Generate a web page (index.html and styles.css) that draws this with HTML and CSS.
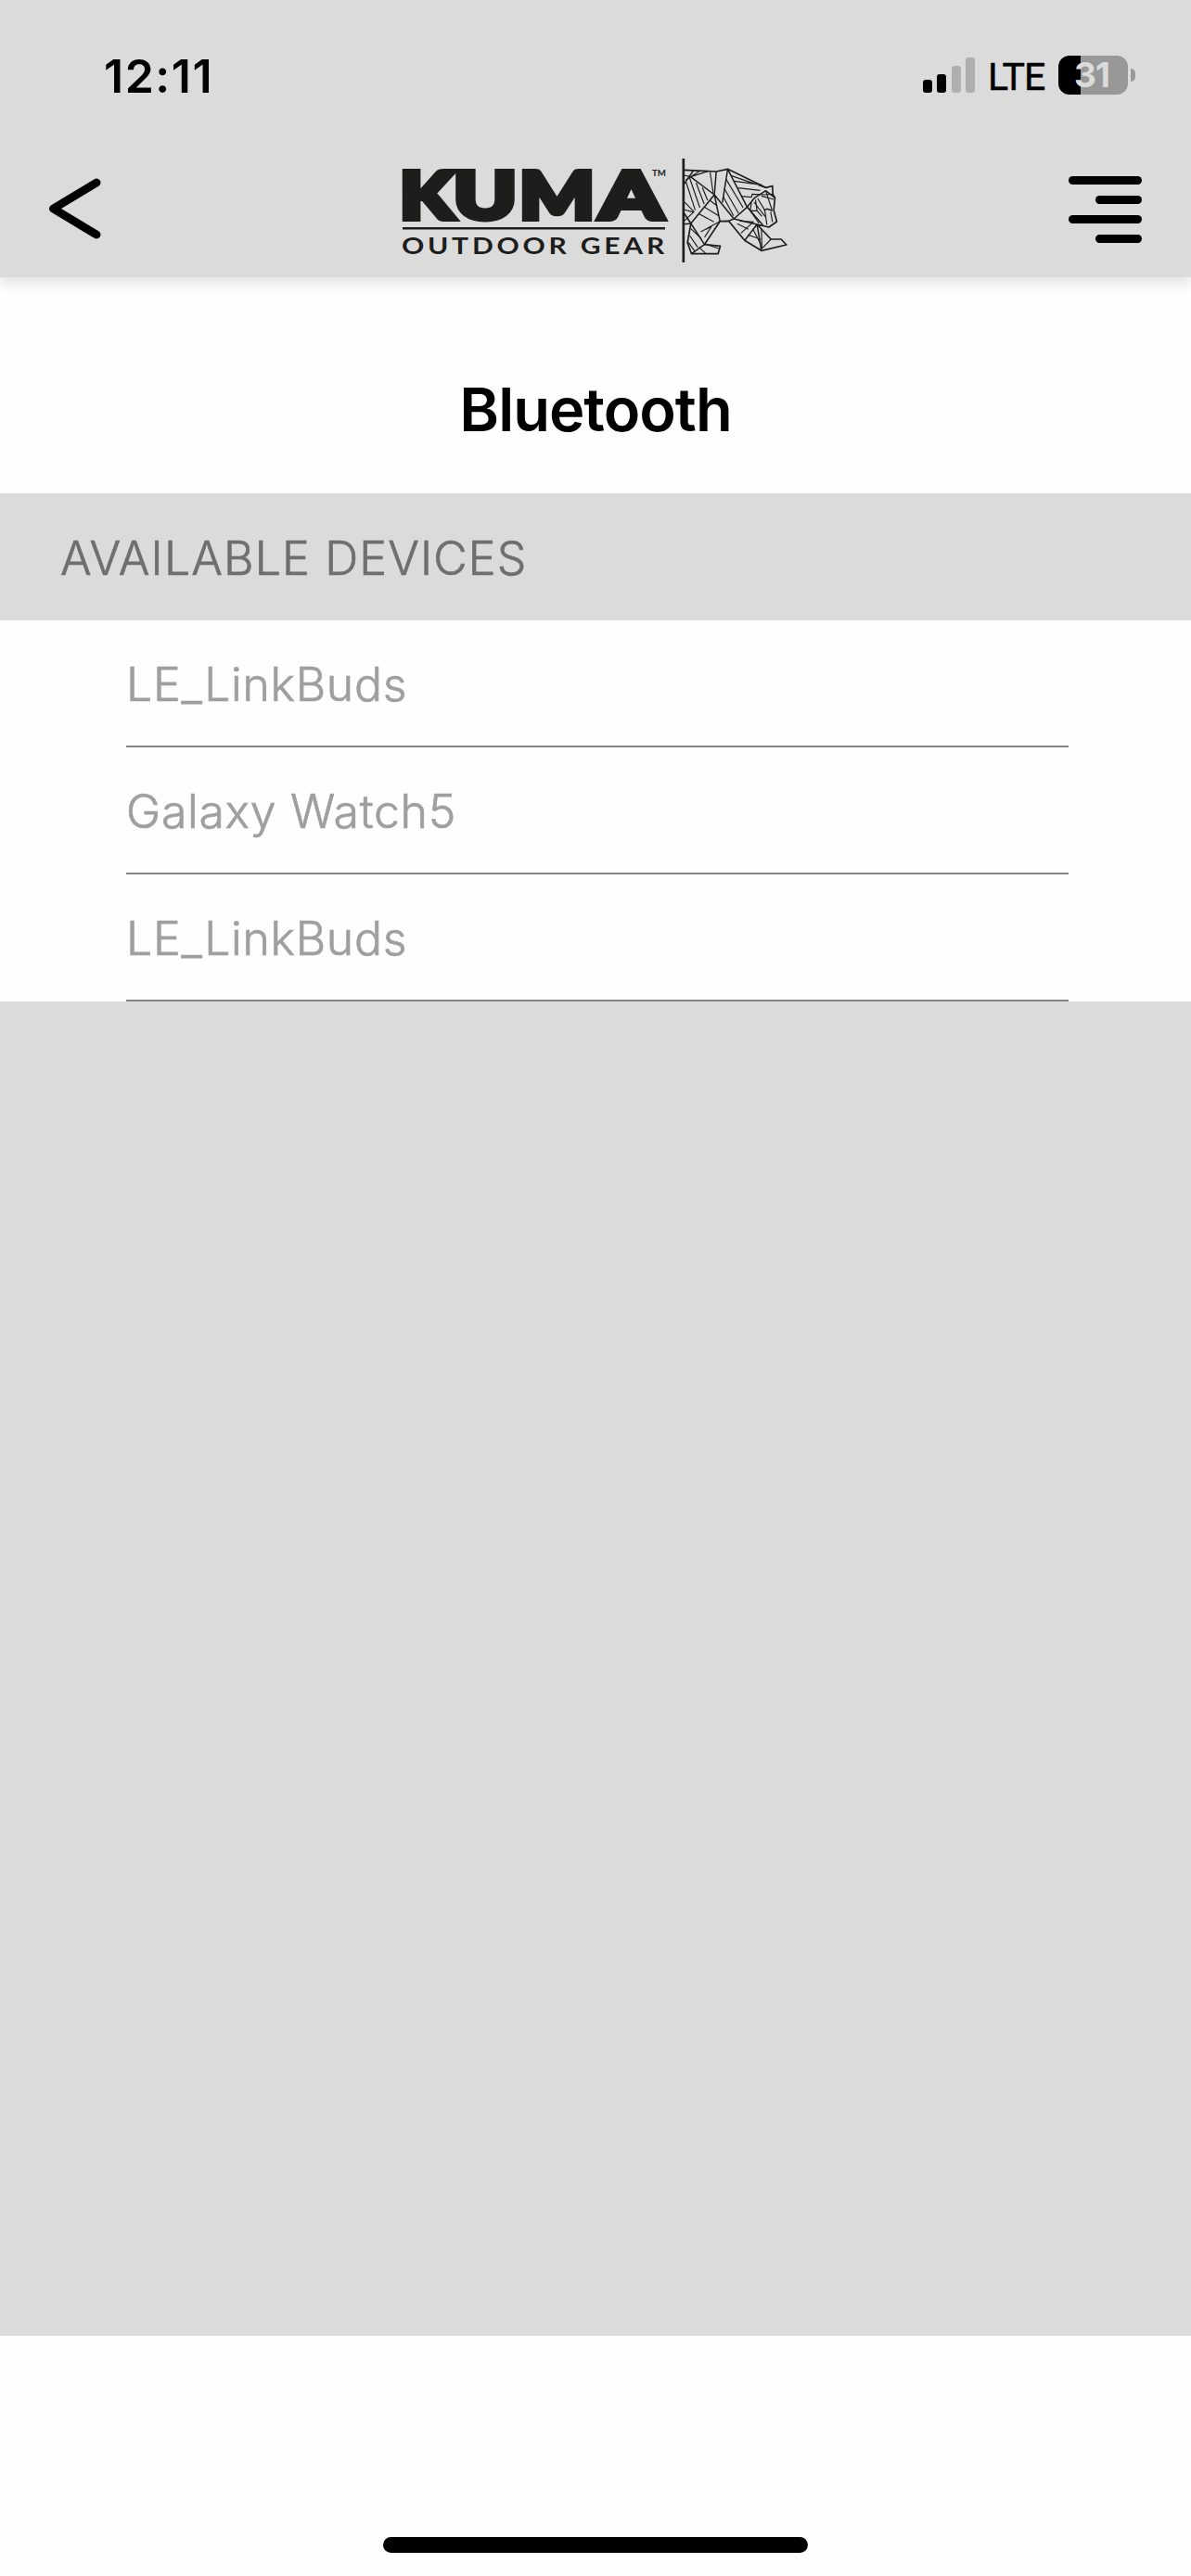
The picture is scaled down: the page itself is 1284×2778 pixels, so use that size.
FILE: index.html
```
<!DOCTYPE html>
<html lang="en">
<head>
    <meta charset="UTF-8">
    <meta name="viewport" content="width=device-width, initial-scale=1.0">
    <title>Bluetooth</title>
    <link rel="stylesheet" href="styles.css">
</head>
<body>

<header id="header">
    <div class="status-bar">
        <span class="time">12:11</span>
        <div class="status-icons">
            <div class="signal">
                <span class="bar bar1"></span>
                <span class="bar bar2"></span>
                <span class="bar bar3 off"></span>
                <span class="bar bar4 off"></span>
            </div>
            <span class="network">LTE</span>
            <div class="battery">31</div>
            <span class="battery-tip"></span>
        </div>
    </div>

    <nav class="nav-bar">
        <svg class="back" viewBox="0 0 58 66">
            <path d="M53 5 L6.500 33 L53 61"/>
        </svg>

        <svg class="logo" viewBox="0 0 420 120">
            <!-- wordmark -->
            <text class="logo-name" y="71"><tspan x="-1" textLength="58" lengthAdjust="spacingAndGlyphs">K</tspan><tspan x="57" textLength="68" lengthAdjust="spacingAndGlyphs">U</tspan><tspan x="128" textLength="81" lengthAdjust="spacingAndGlyphs">M</tspan><tspan x="215" textLength="67" lengthAdjust="spacingAndGlyphs">A</tspan></text>
            <text class="logo-tm" x="271" y="25" textLength="15" lengthAdjust="spacingAndGlyphs">TM</text>
            <path class="logo-rule" d="M2 81.300 H285"/>
            <text class="logo-sub" x="1" y="109" textLength="287" lengthAdjust="spacingAndGlyphs">OUTDOOR GEAR</text>

            <!-- bear -->
            <g class="bear" transform="translate(287.5 -15) scale(0.33333)">
                <path class="bear-wall" d="M52 63 V399"/>
                <path class="bear-outline" d="M54 100 L158 105 L195 97 L318 157 L340 152 L341 178 L348 190 L344 230 L354 267 L328 285 L290 276 L335 324 L368 324 L385 342 L304 361 L250 328 L198 265 L170 266 L120 341 L171 346 L164 371 L78 371 L65 335 L76 273 L54 240"/>
                <path class="bear-line" d="M75 122 L152 180 L76 273 M152 180 L158 105 M152 180 L170 266 M152 180 L215 258 L290 276 M195 97 L258 220 L310 280 M195 97 L178 205 M198 265 L215 258 L258 220 L282 190 L318 167 L348 190 M54 145 L84 102 M54 275 L76 273 L120 341 L78 371 M250 328 L290 276 M290 276 L304 361 M312 230 L322 226 L340 232"/>
                <path class="bear-fine" d="M54 117 L75 122 L132 104 M105 103 L60 132 M138 106 L148 174 M60 138 L90 230 M72 126 L105 222 M93 142 L119 210 M113 157 L130 198 M54 202 L86 235 L54 265 M54 228 L82 236 M120 220 L166 248 M103 242 L150 268 M137 198 L160 215 M108 300 L170 266 M125 292 L143 282 L120 318 M76 290 L110 322 M72 312 L98 350 M68 334 L88 362 M102 350 L124 370 M130 342 L166 354 M190 130 L245 222 M184 160 L230 240 M180 185 L214 248 M206 118 L318 157 M217 136 L305 148 M228 158 L300 166 M238 185 L272 188 L274 178 L318 180 L341 178 M292 192 L315 230 L322 278 M304 184 L344 195 M318 167 L338 228 M285 196 L290 232 L306 250 M272 205 L268 232 L290 232 M260 220 L296 272 M280 204 L316 250 M334 235 L340 268 M226 274 L262 292 M234 265 L278 268 L238 304 M276 290 L302 340 M260 310 L302 324 M304 290 L306 355 M335 324 L308 352"/>
            </g>
        </svg>

        <div class="menu">
            <span></span>
            <span class="short"></span>
            <span></span>
            <span class="short"></span>
        </div>
    </nav>
</header>

<main>
    <h1>Bluetooth</h1>
    <h2>AVAILABLE DEVICES</h2>
    <ul class="device-list">
        <li>LE_LinkBuds</li>
        <li>Galaxy Watch5</li>
        <li>LE_LinkBuds</li>
    </ul>
    <div class="empty-area"></div>
</main>

<footer>
    <div class="home-indicator"></div>
</footer>

</body>
</html>
```

FILE: styles.css
```
* {
    box-sizing: border-box;
}

body {
    display: flex;
    flex-direction: column;
    margin: 0;
    height: 2778px;
    font-family: Inter, Arial, sans-serif;
    background-color: #fefefe;
    color: #000;
}

#header {
    height: 299px;
    background-color: #dbdbdb;
    box-shadow: 0 6px 14px rgba(0, 0, 0, 0.12);
}

/* --- Status bar --- */
.status-bar {
    display: flex;
    justify-content: space-between;
    height: 163px;
    padding: 52px 60px 0 112px;
}

.time {
    font-size: 50px;
    line-height: 60px;
    font-weight: 600;
    letter-spacing: 1.500px;
}

.status-icons {
    display: flex;
    align-items: center;
    height: 58px;
}

.signal {
    display: flex;
    align-items: flex-end;
    gap: 5.500px;
    height: 38px;
    margin-right: 14px;
}

.bar {
    width: 10px;
    border-radius: 3px;
    background-color: #000;
}

.bar1 { height: 14px; }
.bar2 { height: 20px; }
.bar3 { height: 29px; }
.bar4 { height: 38px; }

.bar.off {
    background-color: #afafaf;
}

.network {
    width: 76px;
    padding-top: 3px;
    font-family: Roboto, sans-serif;
    font-size: 41px;
    font-weight: 400;
    letter-spacing: -1px;
    -webkit-text-stroke: 0.500px #000;
}

.battery {
    width: 75px;
    height: 42px;
    padding-right: 3px;
    border-radius: 12px;
    background: linear-gradient(to right, #000 24px, #989898 24px);
    color: #dbdbdb;
    font-size: 37px;
    line-height: 42px;
    font-weight: 700;
    text-align: center;
    letter-spacing: -1px;
}

.battery-tip {
    width: 5px;
    height: 14px;
    margin-left: 3px;
    border-radius: 0 5px 5px 0;
    background-color: #989898;
}

/* --- Navigation --- */
.nav-bar {
    display: flex;
    justify-content: space-between;
    padding: 2px 53px 0 51px;
}

.back {
    width: 58px;
    height: 66px;
    margin-top: 27px;
    fill: none;
    stroke: #000;
    stroke-width: 9;
    stroke-linecap: round;
    stroke-linejoin: round;
}

.logo {
    width: 420px;
    height: 120px;
    margin-left: 22px;
    overflow: visible;
    fill: #1d1d1b;
}

.logo-name {
    font-family: Lato, sans-serif;
    font-size: 70px;
    font-weight: 900;
    stroke: #1d1d1b;
    stroke-width: 6;
}

.logo-tm {
    font-family: Lato, sans-serif;
    font-size: 9px;
    font-weight: 700;
}

.logo-sub {
    font-family: Lato, sans-serif;
    font-size: 24px;
    font-weight: 700;
    letter-spacing: 3px;
}

.logo-rule {
    stroke: #1d1d1b;
    stroke-width: 2.500;
}

.bear {
    fill: none;
    stroke: #1d1d1b;
    stroke-linejoin: round;
}

.bear-wall { stroke-width: 8; }
.bear-outline { stroke-width: 5; }
.bear-line { stroke-width: 4.500; }
.bear-fine { stroke-width: 3.500; }

.menu {
    display: flex;
    flex-direction: column;
    align-items: flex-end;
    gap: 12px;
    width: 79px;
    margin-top: 25px;
}

.menu span {
    width: 79px;
    height: 9px;
    border-radius: 5px;
    background-color: #000;
}

.menu .short {
    width: 50px;
}

/* --- Device list --- */
h1 {
    height: 233px;
    margin: 0;
    padding-top: 103px;
    font-size: 65px;
    line-height: 80px;
    font-weight: 600;
    letter-spacing: -1px;
    text-align: center;
}

h2 {
    height: 137px;
    margin: 0;
    padding-left: 65px;
    background-color: #dbdbdb;
    color: #6f6f6f;
    font-size: 50px;
    line-height: 140px;
    font-weight: 300;
    letter-spacing: 1.150px;
    -webkit-text-stroke: 0.700px #6f6f6f;
}

.device-list {
    margin: 0;
    padding: 0 132px 0 136px;
    list-style: none;
}

.device-list li {
    height: 137px;
    border-bottom: 2px solid #868686;
    color: #9f9f9f;
    font-size: 50px;
    line-height: 139px;
    font-weight: 300;
    letter-spacing: 0.700px;
    -webkit-text-stroke: 0.700px #9f9f9f;
}

.empty-area {
    height: 1439px;
    background-color: #dbdbdb;
}

footer {
    flex: 1;
    display: flex;
    justify-content: center;
    align-items: flex-end;
    padding-bottom: 25px;
}

.home-indicator {
    width: 458px;
    height: 17px;
    border-radius: 9px;
    background-color: #000;
}
```
